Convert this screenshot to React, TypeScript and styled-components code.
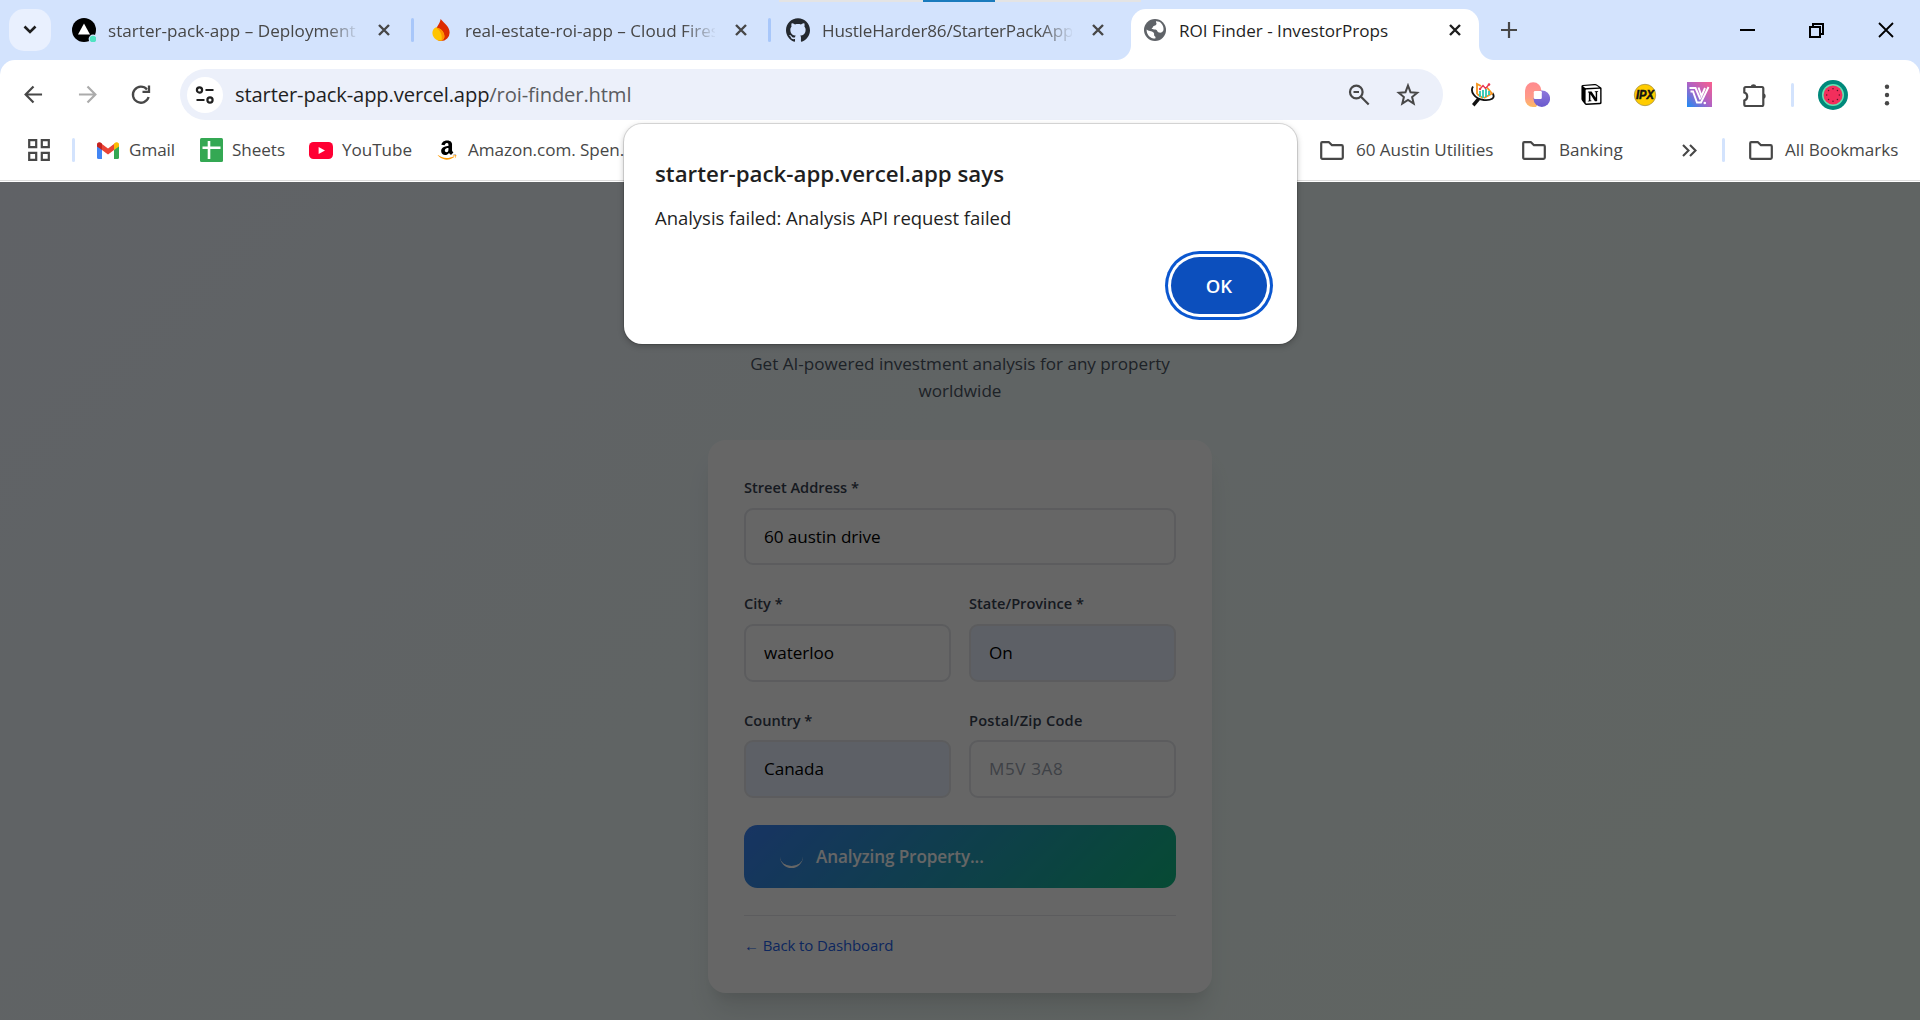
import React from "react";
import styled, { createGlobalStyle } from "styled-components";
import { SiNotion, SiGithub } from "react-icons/si";
import { FaAmazon } from "react-icons/fa";

const GlobalStyle = createGlobalStyle`
  * { box-sizing: border-box; }
  body { margin: 0; overflow: hidden; font-family: "Open Sans", "Noto Sans", sans-serif; }
  svg { display: block; flex: none; }
`;

const Window = styled.div`
  position: relative;
  width: 1920px;
  height: 1020px;
  display: flex;
  flex-direction: column;
  overflow: hidden;
  background: #d3e3fd;
`;

/* ---------- tab strip ---------- */

const TabStrip = styled.div`
  display: flex;
  height: 60px;
  padding: 9px 0 0 9px;
`;

const TabSearch = styled.div`
  width: 42px;
  height: 42px;
  margin-right: 9px;
  border-radius: 15px;
  background: #e9f0fe;
  display: grid;
  place-items: center;
`;

const TabBox = styled.div<{ $active?: boolean }>`
  position: relative;
  width: 348px;
  height: 51px;
  padding: 0 18px 9px 12px;
  display: flex;
  align-items: center;
  border-radius: 15px 15px 0 0;
  background: ${(p) => (p.$active ? "#fff" : "transparent")};
  color: ${(p) => (p.$active ? "#1f1f1f" : "#474747")};
  &::before,
  &::after {
    content: "";
    display: ${(p) => (p.$active ? "block" : "none")};
    position: absolute;
    bottom: 0;
    width: 15px;
    height: 15px;
  }
  &::before {
    left: -15px;
    background: radial-gradient(circle at 0 0, transparent 14.5px, #fff 15.5px);
  }
  &::after {
    right: -15px;
    background: radial-gradient(circle at 100% 0, transparent 14.5px, #fff 15.5px);
  }
`;

const TabIcon = styled.div`
  width: 24px;
  height: 24px;
  display: grid;
  place-items: center;
`;

const TabTitle = styled.div<{ $spacing?: number; $fade?: boolean }>`
  width: 250px;
  margin: 2px 20px 0 12px;
  white-space: nowrap;
  font-size: 17.1px;
  line-height: 26px;
  letter-spacing: ${(p) => p.$spacing ?? 0}px;
  mask-image: ${(p) => (p.$fade ? "linear-gradient(90deg, #000 218px, transparent 252px)" : "none")};
`;

const TabGap = styled.div<{ $line?: boolean }>`
  width: 9px;
  height: 42px;
  display: grid;
  place-items: center;
  &::after {
    content: "";
    width: 3px;
    height: 24px;
    border-radius: 1.5px;
    background: ${(p) => (p.$line ? "#a8c7fa" : "transparent")};
  }
`;

const NewTab = styled.div`
  width: 60px;
  height: 42px;
  display: grid;
  place-items: center;
`;

const Caption = styled.div`
  margin-left: auto;
  height: 42px;
  display: flex;
  align-items: center;
`;

const CaptionButton = styled.div`
  width: 69px;
  height: 40px;
  display: grid;
  place-items: center;
`;

const TopStrip = styled.div`
  position: absolute;
  top: 0;
  left: 779px;
  width: 362px;
  height: 2px;
  background: #e4e4e4;
  &::after {
    content: "";
    display: block;
    width: 72px;
    height: 2px;
    margin-left: 144px;
    background: #1a7bbd;
  }
`;

/* ---------- toolbar ---------- */

const Chrome = styled.div`
  height: 122px;
  border-radius: 15px 15px 0 0;
  background: #fff;
  border-bottom: 1px solid #fff;
  box-shadow: inset 0 -1px 0 #dcdcdc;
`;

const Toolbar = styled.div`
  display: flex;
  align-items: center;
  height: 69px;
  padding: 9px 6px;
`;

const Slot = styled.div<{ $w: number }>`
  flex: none;
  width: ${(p) => p.$w}px;
  height: 48px;
  display: grid;
  place-items: center;
`;

const Omnibox = styled.div`
  flex: none;
  width: 1263px;
  height: 51px;
  margin-left: 12px;
  padding: 0 10px 0 7px;
  display: flex;
  align-items: center;
  border-radius: 26px;
  background: #ecf0fa;
`;

const SiteInfo = styled.div`
  width: 36px;
  height: 36px;
  border-radius: 50%;
  background: #fff;
  display: grid;
  place-items: center;
`;

const Url = styled.div`
  flex: 1;
  margin-left: 12px;
  padding-bottom: 2px;
  font-size: 20.2px;
  line-height: 30px;
  letter-spacing: -0.14px;
  white-space: nowrap;
  color: #1f1f1f;
  span { color: #5a5c60; }
`;

const Divider = styled.div`
  flex: none;
  width: 3px;
  height: 24px;
  border-radius: 1.5px;
  background: #d3e3fd;
`;

/* ---------- bookmarks ---------- */

const Bookmarks = styled.div`
  display: flex;
  align-items: center;
  height: 42px;
  padding: 0 22px 0 28px;
`;

const Bookmark = styled.div<{ $ml: number; $gap: number; $w?: number }>`
  display: flex;
  align-items: center;
  flex: none;
  width: ${(p) => (p.$w ? p.$w + "px" : "auto")};
  margin-left: ${(p) => p.$ml}px;
  gap: ${(p) => p.$gap}px;
  font-size: 17.1px;
  line-height: 24px;
  letter-spacing: -0.05px;
  white-space: nowrap;
  color: #474747;
`;

const BookmarkName = styled.span`
  padding-bottom: 1px;
`;

const Push = styled.div<{ $w: number }>`
  flex: none;
  width: ${(p) => p.$w}px;
`;

/* ---------- page ---------- */

const Page = styled.div`
  position: relative;
  flex: 1;
  display: flex;
  flex-direction: column;
  align-items: center;
  padding-top: 168px;
  background: linear-gradient(135deg, #eff6ff, #f0fdf4);
`;

const Scrim = styled.div`
  position: absolute;
  inset: 0;
  background: rgba(0, 0, 0, 0.6);
`;

const Subtitle = styled.p`
  width: 448px;
  margin: 0;
  text-align: center;
  font-size: 17.1px;
  line-height: 27px;
  color: #4b5563;
`;

const Card = styled.div`
  width: 504px;
  height: 553px;
  margin-top: 36px;
  padding: 36px;
  border-radius: 18px;
  background: #fff;
  box-shadow: 0 22px 28px -6px rgba(0, 0, 0, 0.1), 0 11px 11px -6px rgba(0, 0, 0, 0.06);
`;

const Grid = styled.div`
  display: grid;
  grid-template-columns: 1fr 1fr;
  gap: 27px 18px;
`;

const Field = styled.div<{ $wide?: boolean }>`
  grid-column: ${(p) => (p.$wide ? "1 / -1" : "auto")};
`;

const Label = styled.div<{ $spacing?: number }>`
  margin-bottom: 9px;
  font-size: 14.6px;
  font-weight: 600;
  line-height: 22.5px;
  letter-spacing: ${(p) => p.$spacing ?? 0}px;
  color: #374151;
`;

const Input = styled.div<{ $filled?: boolean; $placeholder?: boolean }>`
  height: 57.8px;
  padding: 0 18px;
  border: 2px solid #e5e7eb;
  border-radius: 9px;
  font-size: 17.1px;
  line-height: 54px;
  letter-spacing: ${(p) => (p.$placeholder ? 0.6 : -0.05)}px;
  background: ${(p) => (p.$filled ? "#e8f0fe" : "#fff")};
  color: ${(p) => (p.$placeholder ? "#9ca3af" : "#000")};
`;

const Submit = styled.div`
  height: 63px;
  margin-top: 27px;
  padding: 0 36px;
  display: flex;
  align-items: center;
  border-radius: 13.5px;
  background: linear-gradient(135deg, #3b82f6, #10b981);
  color: #fff;
  font-size: 17.1px;
  font-weight: 600;
  letter-spacing: -0.1px;
`;

const Spinner = styled.div`
  width: 23px;
  height: 23px;
  margin-right: 13px;
  border-radius: 50%;
  border-bottom: 2px solid #fff;
`;

const Footer = styled.div`
  margin-top: 27px;
  padding-top: 18px;
  border-top: 1px solid #e5e7eb;
  font-size: 15px;
  line-height: 22.5px;
  letter-spacing: -0.12px;
  color: #2563eb;
`;

/* ---------- alert ---------- */

const Alert = styled.div`
  position: absolute;
  left: 624px;
  top: 124px;
  width: 673px;
  height: 220px;
  padding: 33px 30px 24px 31px;
  display: flex;
  flex-direction: column;
  border-radius: 18px;
  background: #fff;
  box-shadow: 0 0 0 1px rgba(0, 0, 0, 0.12), 0 2px 6px rgba(0, 0, 0, 0.25);
  color: #1f1f1f;
`;

const AlertTitle = styled.div`
  font-size: 22.3px;
  font-weight: 600;
  line-height: 34px;
`;

const AlertText = styled.div`
  margin-top: 12px;
  font-size: 18.5px;
  line-height: 30px;
  letter-spacing: -0.03px;
`;

const OkButton = styled.div`
  align-self: flex-end;
  width: 96px;
  height: 57px;
  margin-top: auto;
  margin-bottom: 6px;
  border-radius: 29px;
  background: #0c4fbd;
  box-shadow: 0 0 0 3px #fff, 0 0 0 6px #0b57d0;
  color: #fff;
  font-size: 18.5px;
  font-weight: 600;
  line-height: 57px;
  text-align: center;
`;

/* ---------- icons ---------- */

const Cross = ({ size = 12, color = "#474747", w = 2.4 }: { size?: number; color?: string; w?: number }) => (
  <svg width={size} height={size} viewBox={`0 0 ${size} ${size}`} stroke={color} strokeWidth={w} fill="none">
    <path d={`M1 1L${size - 1} ${size - 1}M${size - 1} 1L1 ${size - 1}`} />
  </svg>
);

const Arrow = ({ flip, color }: { flip?: boolean; color: string }) => (
  <svg width="19" height="19" viewBox="0 0 20 20" fill="none" stroke={color} strokeWidth="2.3">
    <path d={flip ? "M1 10H18M10 1.5L18.3 10L10 18.5" : "M19 10H2M10 1.5L1.7 10L10 18.5"} />
  </svg>
);

const Folder = () => (
  <svg width="24" height="19" viewBox="0 0 24 19" fill="none" stroke="#474747" strokeWidth="2.2" strokeLinejoin="round">
    <path d="M1.2 2.2Q1.2 1.2 2.2 1.2H9L12 4.2H21.5Q22.8 4.2 22.8 5.5V16.5Q22.8 17.8 21.5 17.8H2.5Q1.2 17.8 1.2 16.5Z" />
  </svg>
);

const VercelIcon = () => (
  <svg width="24" height="24" viewBox="0 0 24 24">
    <circle cx="12" cy="12" r="12" fill="#000" />
    <path d="M12 5.5L18 16.5H6Z" fill="#fff" />
    <circle cx="21" cy="21" r="4.4" fill="#d3e3fd" />
    <circle cx="21" cy="21" r="3.3" fill="#50e3c2" />
  </svg>
);

const FirebaseIcon = () => (
  <svg width="18" height="22" viewBox="0 0 18 22">
    <path d="M8.6 0C13 5 17.6 8 17.6 13.4A8.6 8.4 0 0 1 9 22C5 22 2 18 3 13C4 8 8 5 8.6 0Z" fill="#dd2c00" />
    <path d="M3.5 8.5C8 9 12 12 12.4 17C12.5 19 11.5 21 9.5 21.8C4 22.5 .4 18 .4 13.8C.4 11.5 1.5 9.5 3.5 8.5Z" fill="#ffc400" />
    <path d="M3.5 8.5C8 9 12 12 12.4 17C12.5 19 11.5 21 9.5 21.8C11 15 7 10 3.5 8.5Z" fill="#ff9100" />
  </svg>
);

const GlobeIcon = () => (
  <svg width="22" height="22" viewBox="0 0 22 22">
    <circle cx="11" cy="11" r="11" fill="#5f6368" />
    <path d="M12 3.2C13.5 5 11.5 6.6 9.8 7C8.6 7.4 9 9 7.6 9.5C8 10.8 10 10.2 11.5 10.5C13.5 11 13 13 15 13.5C17 14 19 13 19.5 11C20 5.5 16 2 12 2.3Z" fill="#fff" />
    <path d="M2.6 10.5C4 12 8 12 9.5 13.5C10.8 15 9.5 16 10.5 17C11.5 17.5 11.8 18 11.3 19.6C6 19.6 2.4 15.5 2.6 10.5Z" fill="#fff" />
  </svg>
);

const GmailIcon = () => (
  <svg width="22" height="17" viewBox="0 0 22 17">
    <path d="M0 3V15.5Q0 17 1.5 17H5V7Z" fill="#4285f4" />
    <path d="M22 3V15.5Q22 17 20.5 17H17V7Z" fill="#34a853" />
    <path d="M5 2L11 6.5L17 2V8L11 12.5L5 8Z" fill="#ea4335" />
    <path d="M0 2.5C0 0 2.5 -.8 5 1.5V8L0 4.5Z" fill="#c5221f" />
    <path d="M22 2.5C22 0 19.5 -.8 17 1.5V8L22 4.5Z" fill="#fbbc04" />
  </svg>
);

const SheetsIcon = () => (
  <svg width="23" height="24" viewBox="0 0 23 24">
    <rect width="23" height="24" rx="1.5" fill="#34a853" />
    <path d="M2.5 9.8H20.5M9 3V21" stroke="#fff" strokeWidth="2.6" />
  </svg>
);

const YouTubeIcon = () => (
  <svg width="24" height="17" viewBox="0 0 24 17">
    <rect width="24" height="17" rx="4.5" fill="#ff0033" />
    <path d="M9.6 4.9L16 8.5L9.6 12.1Z" fill="#fff" />
  </svg>
);

const Defs = styled.svg`
  position: absolute;
`;

const AmazonMark = styled(FaAmazon)`
  path { fill: url(#amz); }
`;

const AmazonIcon = () => (
  <>
    <Defs width="0" height="0">
      <linearGradient id="amz" x1="0" y1="0" x2="0" y2="1">
        <stop offset="0.74" stopColor="#000" />
        <stop offset="0.74" stopColor="#ff9900" />
      </linearGradient>
    </Defs>
    <AmazonMark size={22} />
  </>
);

const SearchChartIcon = () => (
  <svg width="26" height="26" viewBox="0 0 26 26" fill="none">
    <path d="M3 4.5C0 9 4 17 14 18C21 18.5 26 16.5 22.5 11" stroke="#111" strokeWidth="1.8" />
    <path d="M7.5 15.5L2 22L4.5 24.5L10 18Z" fill="#111" />
    <path d="M7 12V2L11 4M7 12L13 16M17 5.5L22 11.5L14 16" stroke="#f7941d" strokeWidth="1.8" />
    <path d="M10 15V9M13 16V8M16 15V7M19 13V9" stroke="#2cc5b0" strokeWidth="1.8" />
    <path d="M10 7L13 3.5L15.5 6.5L19 2.5" stroke="#e8364f" strokeWidth="1.4" />
    <circle cx="10" cy="7" r="1.2" fill="#e8364f" />
    <circle cx="19" cy="2.5" r="1.3" fill="#e8364f" />
  </svg>
);

const BlobsIcon = () => (
  <svg width="25" height="25" viewBox="0 0 25 25">
    <defs>
      <linearGradient id="blobA" x1="0" y1="0" x2="0" y2="1">
        <stop offset="0" stopColor="#ff8a8f" />
        <stop offset="0.6" stopColor="#ff9a88" />
        <stop offset="1" stopColor="#fdbb62" />
      </linearGradient>
      <linearGradient id="blobB" x1="0" y1="0" x2="0" y2="1">
        <stop offset="0" stopColor="#8f78dc" />
        <stop offset="1" stopColor="#6a5acd" />
      </linearGradient>
    </defs>
    <path d="M0 8.5A8.2 8.2 0 0 1 16.4 8.5V17L11 25H8A8 8 0 0 1 0 17Z" fill="url(#blobA)" />
    <circle cx="16.8" cy="16.7" r="8.3" fill="url(#blobB)" />
    <rect x="8.8" y="9" width="8" height="8" rx="1.2" fill="#fff" />
  </svg>
);

const IpxIcon = () => (
  <svg width="24" height="24" viewBox="0 0 24 24">
    <circle cx="12" cy="12" r="10.7" fill="#fc0" stroke="#a99343" strokeWidth=".8" />
    <text x="12" y="16" textAnchor="middle" fontFamily="Liberation Sans" fontWeight="700" fontStyle="italic" fontSize="12" textLength="18" lengthAdjust="spacingAndGlyphs" fill="#111" stroke="#111" strokeWidth=".5">IPX</text>
  </svg>
);

const VIcon = () => (
  <svg width="25" height="25" viewBox="0 0 25 25" fill="none">
    <defs>
      <linearGradient id="vg" x1="0" y1="1" x2="1" y2="0">
        <stop offset="0" stopColor="#1b8cf5" />
        <stop offset="0.5" stopColor="#b062c4" />
        <stop offset="1" stopColor="#fb5f8c" />
      </linearGradient>
    </defs>
    <rect width="25" height="25" fill="url(#vg)" />
    <path d="M2.5 6H8.5L13.5 17.5M3.5 9.5H6L10 20.5H14L21.5 5M11.5 5.5L14.5 14L18 6" stroke="#fff" strokeWidth="1.9" />
    <circle cx="17.8" cy="21" r="1.3" fill="#fff" />
  </svg>
);

const PuzzleIcon = () => (
  <svg width="24" height="24" viewBox="0 0 24 24">
    <path d="M7.6 3.5A3 3 0 0 1 13.4 3.5ZM20.5 10.2A3 3 0 0 1 20.5 16Z" fill="#474747" />
    <path d="M1.3 5.5Q1.3 4 2.8 4H19Q20.3 4 20.3 5.5V21.5Q20.3 23 19 23H2.8Q1.3 23 1.3 21.5V17.5A4.2 4.2 0 0 0 1.3 9.5Z" fill="none" stroke="#474747" strokeWidth="2.2" />
  </svg>
);

const MelonIcon = () => (
  <svg width="30" height="30" viewBox="0 0 30 30">
    <circle cx="15" cy="15" r="15" fill="#00897b" />
    <circle cx="15" cy="15" r="11" fill="#64e3b4" />
    <circle cx="15" cy="15" r="9.5" fill="#f22e5c" />
    {[0, 1, 2, 3, 4, 5, 6, 7].map((i) => (
      <circle key={i} cx={15 + 6.3 * Math.sin((i * Math.PI) / 4)} cy={15 - 6.3 * Math.cos((i * Math.PI) / 4)} r=".75" fill="#5c1228" />
    ))}
  </svg>
);

const tabs = [
  { title: "starter-pack-app – Deployment", icon: <VercelIcon />, spacing: 0.02 },
  { title: "real-estate-roi-app – Cloud Fires", icon: <FirebaseIcon />, spacing: 0 },
  { title: "HustleHarder86/StarterPackApp", icon: <SiGithub size={24} color="#24292f" />, spacing: -0.18 },
  { title: "ROI Finder - InvestorProps", icon: <GlobeIcon />, active: true },
];

export default function App() {
  return (
    <Window>
      <GlobalStyle />
      <TabStrip>
        <TabSearch>
          <svg width="14" height="10" viewBox="0 0 14 10" fill="none" stroke="#1f1f1f" strokeWidth="2.6">
            <path d="M1.5 1.5L7 7L12.5 1.5" />
          </svg>
        </TabSearch>
        {tabs.map((t, i) => (
          <React.Fragment key={t.title}>
            <TabBox $active={t.active}>
              <TabIcon>{t.icon}</TabIcon>
              <TabTitle $fade={!t.active} $spacing={t.spacing}>{t.title}</TabTitle>
              <Cross size={12} color={t.active ? "#1f1f1f" : "#474747"} />
            </TabBox>
            {i < 3 && <TabGap $line={i < 2} />}
          </React.Fragment>
        ))}
        <NewTab>
          <svg width="16" height="16" viewBox="0 0 16 16" stroke="#474747" strokeWidth="2.2">
            <path d="M8 0V16M0 8H16" />
          </svg>
        </NewTab>
        <Caption>
          <CaptionButton>
            <svg width="15" height="2" viewBox="0 0 15 2"><rect width="15" height="2" fill="#000" /></svg>
          </CaptionButton>
          <CaptionButton>
            <svg width="15" height="15" viewBox="0 0 15 15" fill="none" stroke="#000" strokeWidth="2">
              <path d="M1 4H11V14H1ZM4 4V1H14V11H11" />
            </svg>
          </CaptionButton>
          <CaptionButton><Cross size={16} color="#000" w={1.8} /></CaptionButton>
        </Caption>
      </TabStrip>
      <TopStrip />
      <Chrome>
        <Toolbar>
          <Slot $w={54}><Arrow color="#474747" /></Slot>
          <Slot $w={54}><Arrow flip color="#ababab" /></Slot>
          <Slot $w={54}>
            <svg width="20" height="20" viewBox="0 0 20 20" fill="none" stroke="#474747" strokeWidth="2.3">
              <path d="M16 4.5A8 8 0 1 0 17.6 12" />
              <path d="M18 .5V6.8H11.5" />
            </svg>
          </Slot>
          <Omnibox>
            <SiteInfo>
              <svg width="20" height="18" viewBox="0 0 20 18" fill="none" stroke="#1f1f1f" strokeWidth="2.2">
                <circle cx="4.5" cy="4" r="2.6" />
                <circle cx="15" cy="14" r="2.6" />
                <path d="M10.5 4H18.5M1.5 14H9.5" />
              </svg>
            </SiteInfo>
            <Url>starter-pack-app.vercel.app<span>/roi-finder.html</span></Url>
            <Slot $w={48}>
              <svg width="22" height="22" viewBox="0 0 22 22" fill="none" stroke="#474747" strokeWidth="2.2">
                <circle cx="8.3" cy="8" r="6.3" />
                <path d="M13 12.8L20.7 20.5M5.5 8H11" />
              </svg>
            </Slot>
            <Slot $w={50}>
              <svg width="24" height="24" viewBox="0 0 24 24" fill="none" stroke="#474747" strokeWidth="2">
                <path d="M12 2.5L14.5 9.2L21.2 9.7L16.1 14L17.7 20.5L12 17L6.3 20.5L7.9 14L2.8 9.7L9.5 9.2Z" />
              </svg>
            </Slot>
          </Omnibox>
          <Push $w={13} />
          <Slot $w={54}><SearchChartIcon /></Slot>
          <Slot $w={54}><BlobsIcon /></Slot>
          <Slot $w={54}><SiNotion size={21} color="#000" /></Slot>
          <Slot $w={54}><IpxIcon /></Slot>
          <Slot $w={54}><VIcon /></Slot>
          <Slot $w={58}><PuzzleIcon /></Slot>
          <Push $w={7} />
          <Divider />
          <Push $w={12} />
          <Slot $w={54}><MelonIcon /></Slot>
          <Slot $w={54}>
            <svg width="6" height="26" viewBox="0 0 6 26" fill="#474747">
              <circle cx="3" cy="4.8" r="2.2" /><circle cx="3" cy="13" r="2.2" /><circle cx="3" cy="21.2" r="2.2" />
            </svg>
          </Slot>
        </Toolbar>
        <Bookmarks>
          <svg width="22" height="22" viewBox="0 0 22 22" fill="none" stroke="#474747" strokeWidth="2.2">
            <path d="M1.2 1.2H8.2V8.2H1.2ZM13.8 1.2H20.8V8.2H13.8ZM1.2 13.8H8.2V20.8H1.2ZM13.8 13.8H20.8V20.8H13.8Z" />
          </svg>
          <Push $w={22} />
          <Divider />
          <Bookmark $ml={22} $gap={10} $w={81}><GmailIcon /><BookmarkName>Gmail</BookmarkName></Bookmark>
          <Bookmark $ml={22} $gap={9} $w={87}><SheetsIcon /><BookmarkName>Sheets</BookmarkName></Bookmark>
          <Bookmark $ml={22} $gap={9} $w={107}><YouTubeIcon /><BookmarkName>YouTube</BookmarkName></Bookmark>
          <Bookmark $ml={20} $gap={10} $w={862}><AmazonIcon /><BookmarkName>Amazon.com. Spen...</BookmarkName></Bookmark>
          <Bookmark $ml={22} $gap={12} $w={180}><Folder /><BookmarkName>60 Austin Utilities</BookmarkName></Bookmark>
          <Bookmark $ml={22} $gap={13} $w={160}><Folder /><BookmarkName>Banking</BookmarkName></Bookmark>
          <svg width="15" height="13" viewBox="0 0 15 13" fill="none" stroke="#474747" strokeWidth="2.1">
            <path d="M1 1L6.5 6.5L1 12M8 1L13.5 6.5L8 12" />
          </svg>
          <Push $w={25} />
          <Divider />
          <Bookmark $ml={24} $gap={12}><Folder /><BookmarkName>All Bookmarks</BookmarkName></Bookmark>
        </Bookmarks>
      </Chrome>
      <Page>
        <Subtitle>Get AI-powered investment analysis for any property worldwide</Subtitle>
        <Card>
          <Grid>
            <Field $wide><Label>Street Address *</Label><Input>60 austin drive</Input></Field>
            <Field><Label>City *</Label><Input>waterloo</Input></Field>
            <Field><Label>State/Province *</Label><Input $filled>On</Input></Field>
            <Field><Label>Country *</Label><Input $filled>Canada</Input></Field>
            <Field><Label $spacing={0.24}>Postal/Zip Code</Label><Input $placeholder>M5V 3A8</Input></Field>
          </Grid>
          <Submit><Spinner />Analyzing Property...</Submit>
          <Footer>← Back to Dashboard</Footer>
        </Card>
        <Scrim />
      </Page>
      <Alert>
        <AlertTitle>starter-pack-app.vercel.app says</AlertTitle>
        <AlertText>Analysis failed: Analysis API request failed</AlertText>
        <OkButton>OK</OkButton>
      </Alert>
    </Window>
  );
}
